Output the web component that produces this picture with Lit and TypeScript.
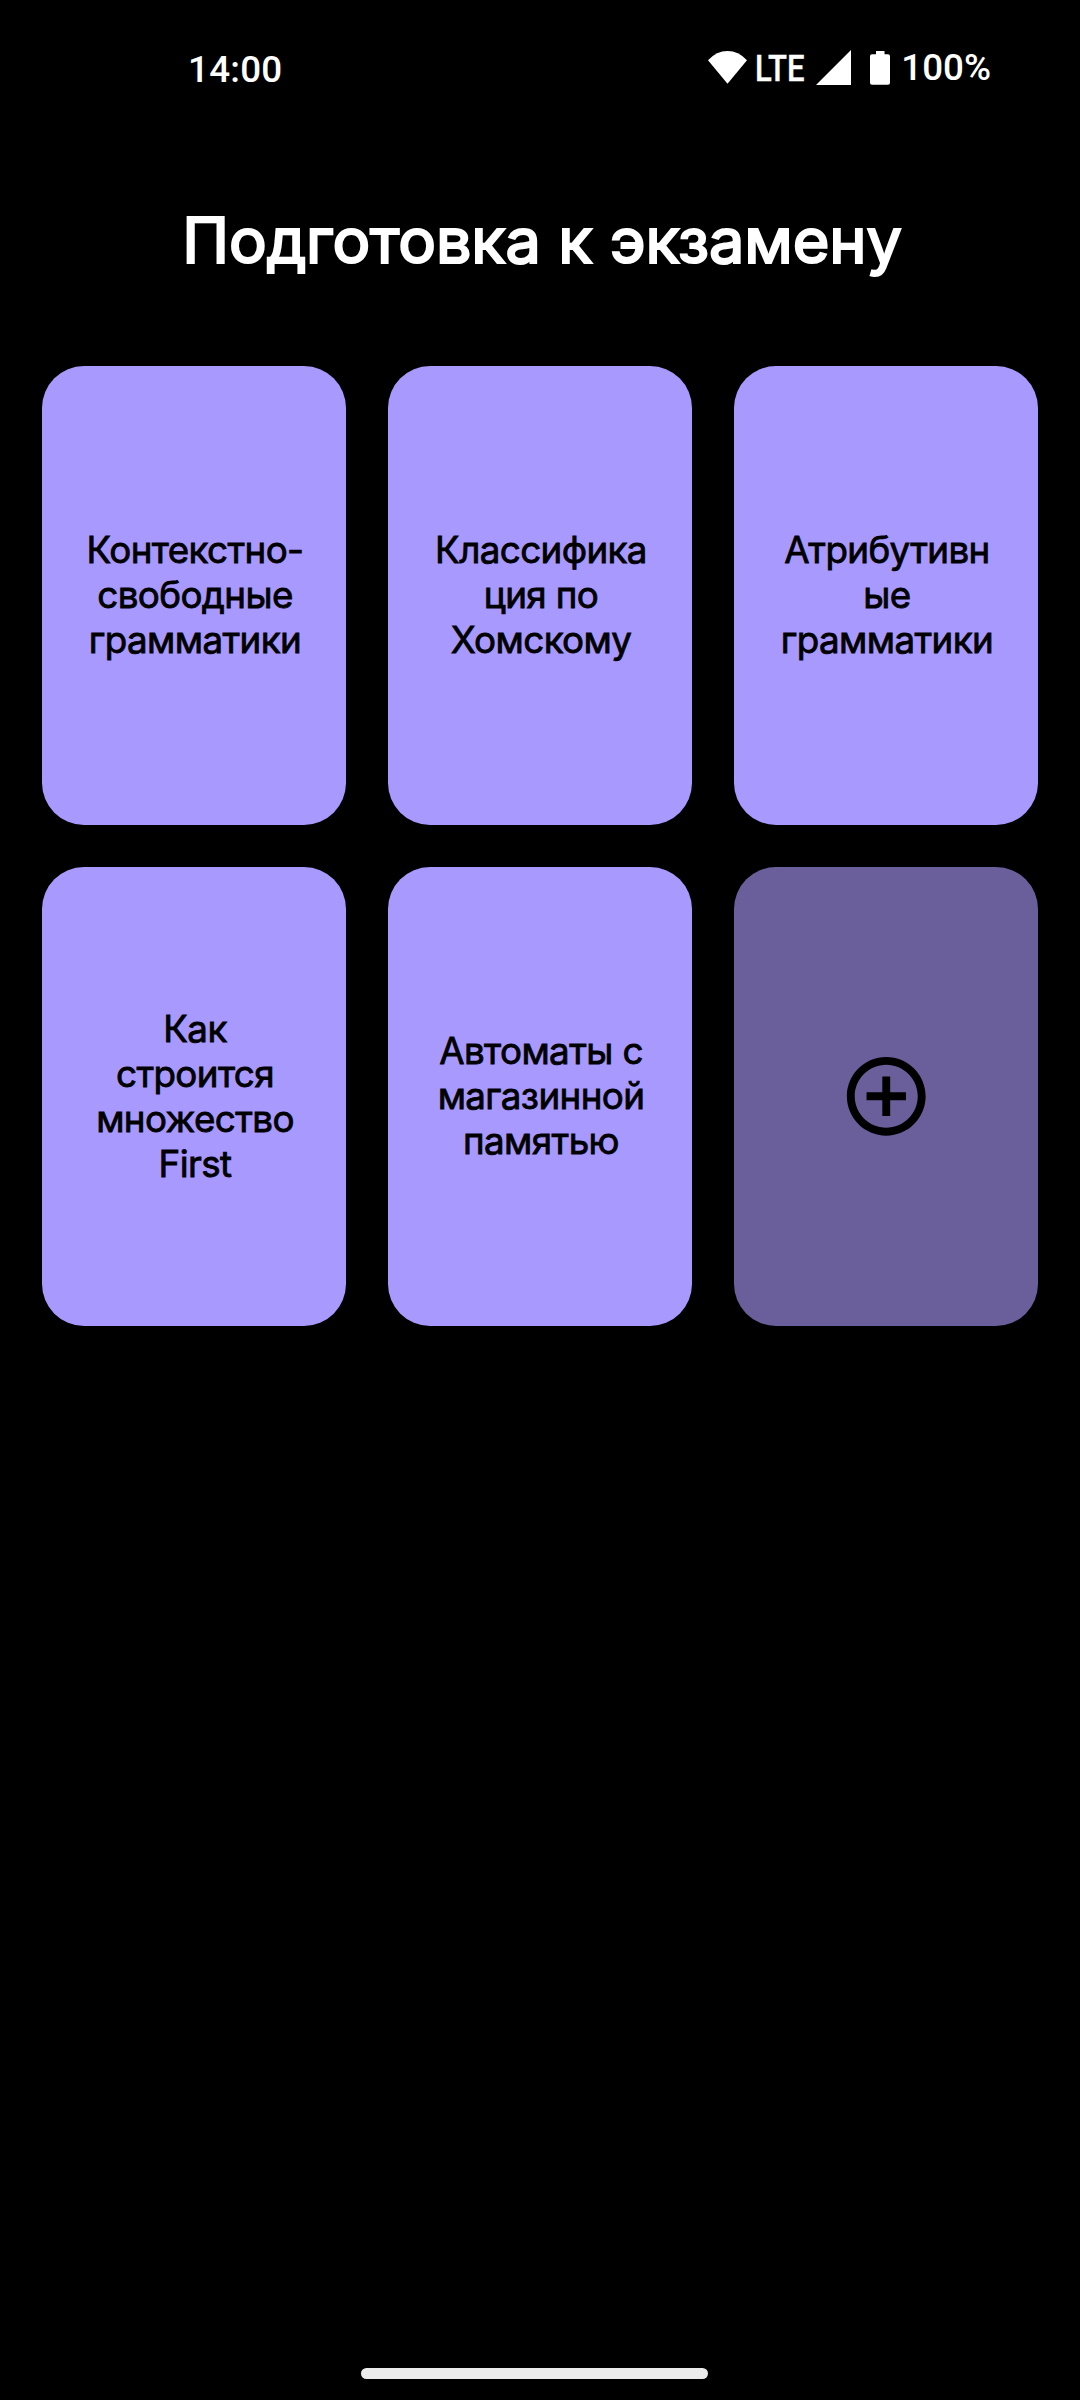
import { LitElement, html, css } from "lit";
import { customElement, property } from "lit/decorators.js";

@customElement("status-bar")
class StatusBar extends LitElement {
  static styles = css`
    :host {
      display: flex;
      justify-content: space-between;
      align-items: flex-start;
      height: 136px;
      padding: 0 89px 0 188px;
      box-sizing: border-box;
      color: #fff;
      font: 500 36.75px/44px Roboto, sans-serif;
      white-space: nowrap;
    }
    .time { padding-top: 48px; letter-spacing: 0.25px; }
    .system { display: flex; align-items: flex-start; }
    .wifi { margin: 51px 8px 0 0; }
    .network {
      width: 61px;
      padding-top: 47px;
      transform: scaleX(0.845);
      transform-origin: left;
      -webkit-text-stroke: 0.4px #fff;
    }
    .signal { margin: 50px 19px 0 0; }
    .battery { margin: 51px 11px 0 0; }
    .level { padding-top: 46px; }
    svg { display: block; fill: #fff; flex: none; }
  `;
  render() {
    return html`
      <span class="time">14:00</span>
      <div class="system">
        <svg class="wifi" width="39" height="33" viewBox="0 0 39 33"><path d="M0 9.300Q8.500 0 19.500 0T39 9.300L19.500 32.700z"/></svg>
        <span class="network">LTE</span>
        <svg class="signal" width="35" height="35" viewBox="0 0 35 35"><path d="M35 0V35H0z"/></svg>
        <svg class="battery" width="20" height="34" viewBox="0 0 20 34"><path d="M6 0h8.500v3.300H18q2 0 2 2v26.400q0 2-2 2H2q-2 0-2-2V5.300q0-2 2-2h4z"/></svg>
        <span class="level">100%</span>
      </div>
    `;
  }
}

@customElement("topic-card")
class TopicCard extends LitElement {
  @property({ attribute: false }) lines: string[] = [];

  static styles = css`
    :host {
      display: flex;
      flex-direction: column;
      align-items: center;
      justify-content: center;
      padding: 0 0 2px 2px;
      box-sizing: border-box;
      border-radius: 42px;
      background: #a899ff;
      color: #000;
      font: 400 36.75px/45px Inter, sans-serif;
      letter-spacing: -0.6px;
      -webkit-text-stroke: 0.8px #000;
      white-space: nowrap;
    }
  `;
  render() {
    return this.lines.map((line) => html`<span>${line}</span>`);
  }
}

@customElement("app-root")
class AppRoot extends LitElement {
  private topics = [
    ["Контекстно-", "свободные", "грамматики"],
    ["Классифика", "ция по", "Хомскому"],
    ["Атрибутивн", "ые", "грамматики"],
    ["Как", "строится", "множество", "First"],
    ["Автоматы с", "магазинной", "памятью"],
  ];

  static styles = css`
    :host {
      display: flex;
      flex-direction: column;
      width: 1080px;
      height: 2400px;
      background: #000;
      overflow: hidden;
    }
    .title {
      margin: 0;
      height: 230px;
      padding: 65px 0 0 4px;
      box-sizing: border-box;
      text-align: center;
      color: #fff;
      font: 400 63px/78px Inter, sans-serif;
      letter-spacing: -0.12px;
      -webkit-text-stroke: 2.2px #fff;
      white-space: nowrap;
    }
    .grid {
      display: grid;
      grid-template-columns: repeat(3, 304px);
      grid-auto-rows: 459px;
      gap: 42px;
      padding: 0 42px;
    }
    .add {
      display: flex;
      align-items: center;
      justify-content: center;
      border: 0;
      padding: 0 0 0 1px;
      border-radius: 42px;
      background: #6a5f9b;
    }
    .home {
      width: 347px;
      height: 11px;
      margin: auto 0 21px 361px;
      border-radius: 6px;
      background: #ebebeb;
    }
  `;
  render() {
    return html`
      <status-bar></status-bar>
      <h1 class="title">Подготовка к экзамену</h1>
      <div class="grid">
        ${this.topics.map((lines) => html`<topic-card .lines=${lines}></topic-card>`)}
        <button class="add" aria-label="+">
          <svg width="94.5" height="94.5" viewBox="0 0 24 24">
            <path d="M13 7h-2v4H7v2h4v4h2v-4h4v-2h-4V7zm-1-5C6.480 2 2 6.480 2 12s4.480 10 10 10 10-4.480 10-10S17.520 2 12 2zm0 18c-4.410 0-8-3.590-8-8s3.590-8 8-8 8 3.590 8 8-3.590 8-8 8z"/>
          </svg>
        </button>
      </div>
      <div class="home"></div>
    `;
  }
}
